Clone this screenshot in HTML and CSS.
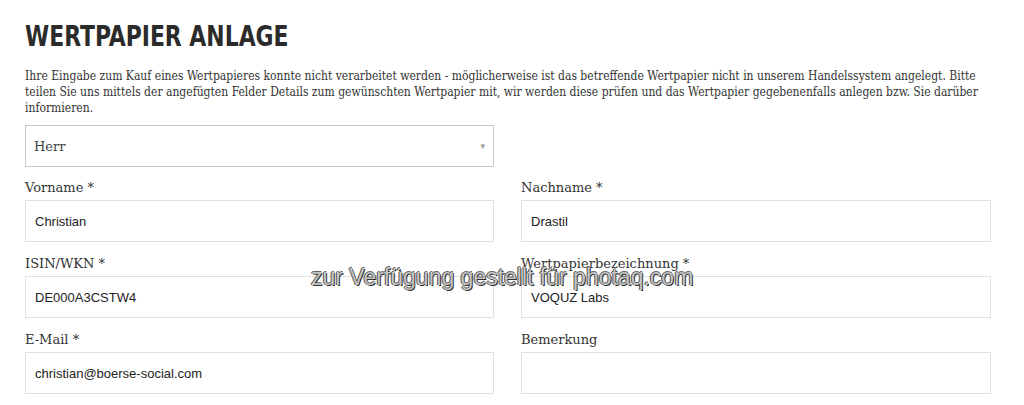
FILE: index.html
```html
<!DOCTYPE html>
<html lang="de">
<head>
  <meta charset="UTF-8">
  <title>Wertpapier Anlage</title>
  <link rel="stylesheet" href="styles.css">
</head>
<body>
  <div class="page">
    <h1><span>Wertpapier Anlage</span></h1>
    <p class="intro">Ihre Eingabe zum Kauf eines Wertpapieres konnte nicht verarbeitet werden - möglicherweise ist das betreffende Wertpapier nicht in unserem Handelssystem angelegt. Bitte teilen Sie uns mittels der angefügten Felder Details zum gewünschten Wertpapier mit, wir werden diese prüfen und das Wertpapier gegebenenfalls anlegen bzw. Sie darüber informieren.</p>

    <form class="form-grid">
      <div class="form-group salutation">
        <div class="select-box">
          <span>Herr</span>
          <span class="arrow">&#9662;</span>
        </div>
      </div>
      <div></div>

      <div class="form-group">
        <label for="vorname">Vorname *</label>
        <div class="field" id="vorname">Christian</div>
      </div>
      <div class="form-group">
        <label for="nachname">Nachname *</label>
        <div class="field" id="nachname">Drastil</div>
      </div>

      <div class="form-group">
        <label for="isin">ISIN/WKN *</label>
        <div class="field" id="isin">DE000A3CSTW4</div>
      </div>
      <div class="form-group">
        <label for="bez">Wertpapierbezeichnung *</label>
        <div class="field" id="bez">VOQUZ Labs</div>
      </div>

      <div class="form-group">
        <label for="mail">E-Mail *</label>
        <div class="field" id="mail">christian@boerse-social.com</div>
      </div>
      <div class="form-group">
        <label for="bem">Bemerkung</label>
        <div class="field" id="bem"></div>
      </div>
    </form>
  </div>

  <div class="watermark">zur Verfügung gestellt für photaq.com</div>
</body>
</html>
```

FILE: styles.css
```css
body {
  margin: 0;
  background: #fff;
  color: #333;
  font-family: "DejaVu Serif", serif;
}

.page {
  width: 967px;
  padding: 19px 0 0 25px;
}

h1 {
  margin: 0 0 15px;
  font-family: "DejaVu Sans Condensed", sans-serif;
  font-weight: bold;
  font-size: 29px;
  line-height: 34px;
  text-transform: uppercase;
  color: #2b2b2b;
}

h1 span {
  display: inline-block;
  transform: scaleX(0.84);
  transform-origin: left center;
}

.intro {
  margin: 0 0 9px;
  font-family: "DejaVu Serif Condensed", "DejaVu Serif", serif;
  font-size: 12px;
  line-height: 16px;
  color: #333;
}

.form-grid {
  display: grid;
  grid-template-columns: 469px 470px;
  column-gap: 27px;
}

.form-group {
  margin-bottom: 14px;
}

.form-group.salutation {
  margin-bottom: 13px;
}

.form-group label {
  display: block;
  height: 16px;
  margin-bottom: 4px;
  font-size: 13px;
  line-height: 16px;
  color: #333;
}

.select-box {
  display: flex;
  align-items: center;
  justify-content: space-between;
  height: 42px;
  padding: 0 8px;
  box-sizing: border-box;
  border: 1px solid #c8c8c8;
  font-size: 13px;
  color: #444;
}

.select-box .arrow {
  font-size: 9px;
  color: #999;
}

.field {
  display: flex;
  align-items: center;
  height: 42px;
  padding: 0 9px;
  box-sizing: border-box;
  border: 1px solid #e0e0e0;
  font-family: "Liberation Sans", Arial, sans-serif;
  font-size: 13px;
  color: #222;
}

.watermark {
  position: absolute;
  left: 311px;
  top: 264px;
  font-family: "Liberation Sans", Arial, sans-serif;
  font-size: 23px;
  color: #c4c4c4;
  text-shadow: 1px 1px 0 #333, -1px 0 0 #555, 0 -1px 0 #666;
}
```
